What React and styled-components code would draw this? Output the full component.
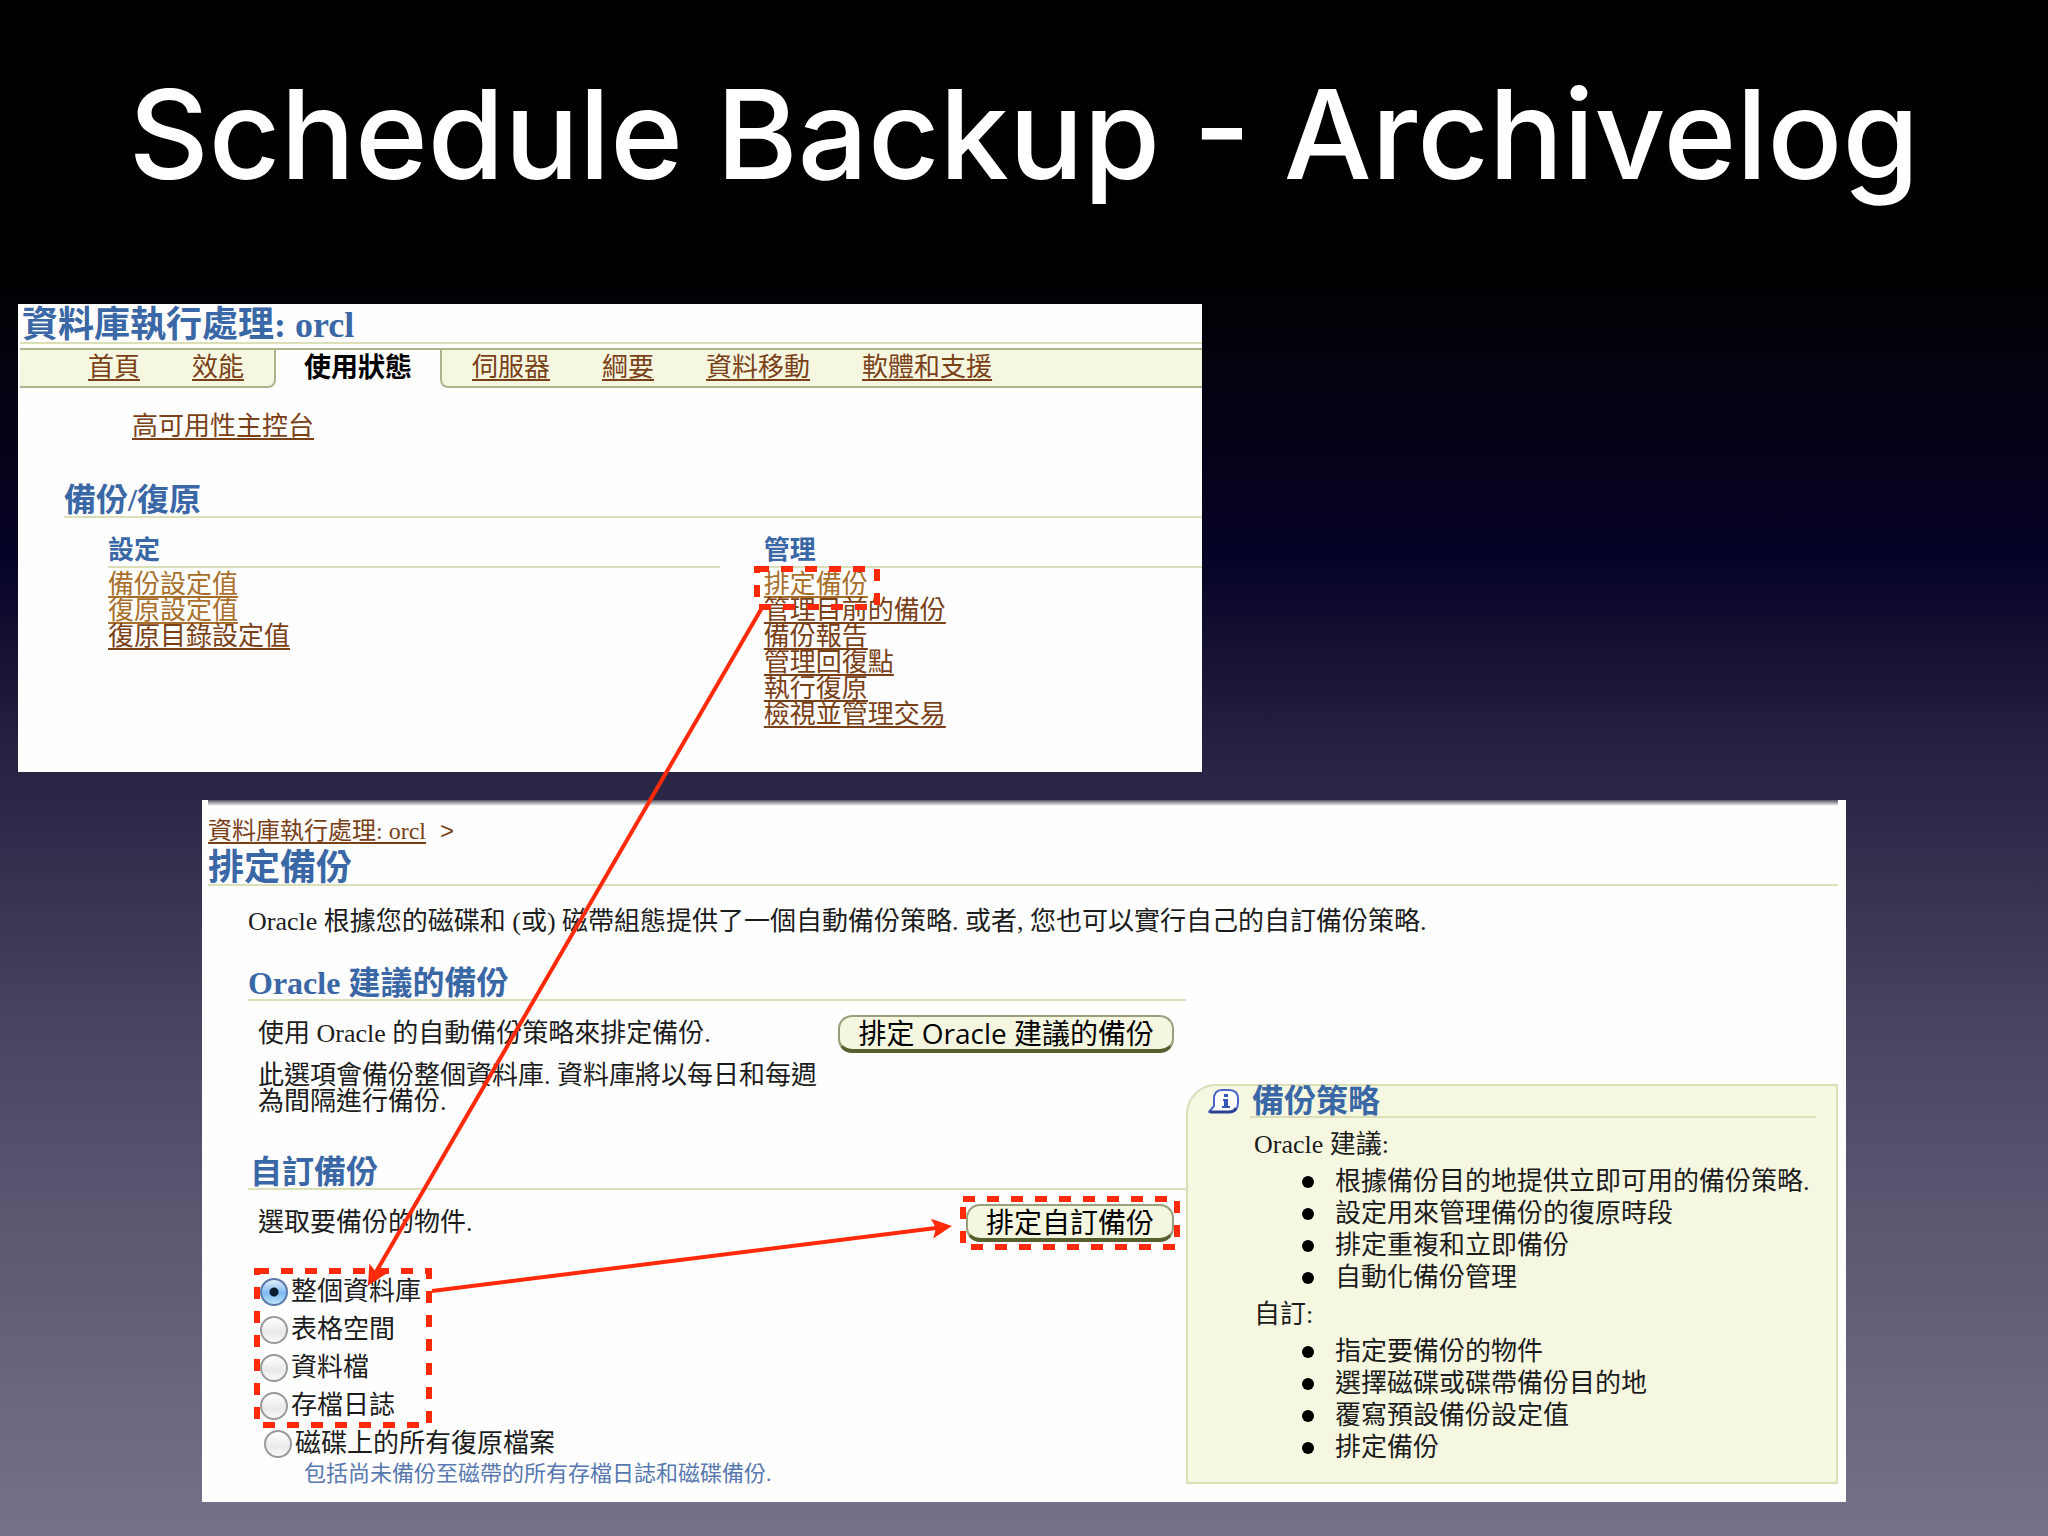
import styled, { createGlobalStyle, css } from 'styled-components';
import { useState } from 'react';

const colors = {
  heading: '#3a67a5',
  link: '#7a4118',
  visited: '#a8702c',
  note: '#5878b0',
  rule: '#dbdfb8',
  tabBorder: '#b0b48e',
  cream: '#f6f7e1',
  mark: '#ff2a0a',
};

const fonts = {
  title: 'Inter, "Liberation Sans", sans-serif',
  body: '"Liberation Serif", "Noto Sans CJK TC", serif',
  button: '"Open Sans", "Noto Sans CJK TC", sans-serif',
};

const GlobalStyle = createGlobalStyle`
  * {
    box-sizing: border-box;
  }

  body {
    margin: 0;
    background: #000;
  }

  h1, h2, h3, p, ul {
    margin: 0;
    padding: 0;
  }
`;

const Slide = styled.main`
  position: relative;
  min-height: 100vh;
  overflow: hidden;
  padding-bottom: 34px;
  font-family: ${fonts.body};
  font-size: 26px;
  line-height: 26px;
  color: #1c1c1c;
  background: linear-gradient(#000 0%, #010103 18%, #030210 25%, #050325 36%, #252242 49%, #4c4864 69%, #5f5d76 83%, #75738a 100%);
`;

const SlideTitle = styled.h1`
  padding-top: 70px;
  height: 304px;
  font-family: ${fonts.title};
  font-size: 124px;
  line-height: 128px;
  font-weight: 500;
  text-align: center;
  white-space: nowrap;
  color: #fff;
`;

const InstancePanel = styled.section`
  width: 57.8%;
  height: 468px;
  margin-left: 18px;
  padding-left: 2px;
  background: #fefefe;
`;

const PageHeading = styled.h2`
  font-size: 36px;
  line-height: 32px;
  color: ${colors.heading};
  border-bottom: 2px solid ${colors.rule};
`;

const InstanceHeading = styled(PageHeading)`
  padding: 5px 0 0 2px;
  margin-bottom: 4px;
  height: 40px;
`;

const SectionHeading = styled.h3`
  font-size: 32px;
  line-height: 32px;
  color: ${colors.heading};
  border-bottom: 2px solid ${colors.rule};
`;

const GroupHeading = styled(SectionHeading)`
  font-size: 26px;
  line-height: 30px;
`;

const Link = styled.a`
  color: ${({ $visited }) => $visited ? colors.visited : colors.link};
  text-decoration: underline;
  text-decoration-thickness: 2px;
  text-underline-offset: 3px;
`;

const Tabs = styled.nav`
  display: flex;
  height: 40px;
  line-height: 36px;
`;

const tabSurface = css`
  display: flex;
  gap: 52px;
  background: ${colors.cream};
  border: 2px solid ${colors.tabBorder};
`;

const TabsBefore = styled.div`
  ${tabSurface}
  padding: 0 30px 0 68px;
  border-left: none;
  border-bottom-right-radius: 8px;
`;

const TabsAfter = styled.div`
  ${tabSurface}
  flex: 1;
  padding-left: 30px;
  border-right: none;
  border-bottom-left-radius: 8px;
`;

const CurrentTab = styled.span`
  padding: 0 28px;
  border-top: 2px solid ${colors.tabBorder};
  font-size: 27px;
  font-weight: 700;
  color: #000;
`;

const SubNav = styled.div`
  padding: 26px 0 0 112px;
`;

const Maintenance = styled.div`
  padding: 44px 0 0 44px;
`;

const LinkColumns = styled.div`
  display: grid;
  grid-template-columns: 612fr 438fr;
  gap: 44px;
  padding: 18px 0 0 44px;
`;

const LinkList = styled.ul`
  list-style: none;
  padding-top: 4px;
`;

const SchedulePanel = styled.section`
  margin: 28px 202px 0;
  padding: 0 8px 17px 6px;
  background: #fefefe;
`;

const PanelShade = styled.div`
  height: 6px;
  background: linear-gradient(#55555f, #fefefe);
`;

const Breadcrumb = styled.div`
  display: flex;
  gap: 14px;
  padding-top: 11px;
  font-size: 24px;
  line-height: 28px;
  color: ${colors.link};
`;

const Separator = styled.span`
  font-family: "Liberation Sans", sans-serif;
`;

const ScheduleHeading = styled(PageHeading)`
  padding-top: 7px;
`;

const Intro = styled.p`
  padding: 23px 0 0 40px;
`;

const Columns = styled.div`
  display: grid;
  grid-template-columns: 978fr 652fr;
  padding-top: 32px;
`;

const Strategies = styled.div`
  padding-left: 40px;
`;

const ActionRow = styled.div`
  display: flex;
  align-items: center;
  justify-content: space-between;
  padding: 14px 12px 0 10px;
`;

const ActionButton = styled.button`
  height: 38px;
  padding: 0 18px;
  border: 2px solid #9a9e7a;
  border-bottom: 4px solid #55602e;
  border-radius: 14px;
  background: #f4f6df;
  font-family: ${fonts.button};
  font-size: 28px;
  line-height: 30px;
  white-space: nowrap;
  color: #000;
  cursor: pointer;
`;

const Description = styled.p`
  max-width: 580px;
  padding: 10px 0 0 10px;
`;

const CustomHeading = styled(SectionHeading)`
  margin-top: 41px;
  padding-left: 2px;
`;

const Options = styled.div`
  padding: 31px 0 0 12px;
`;

const Option = styled.label`
  display: flex;
  align-items: center;
  gap: 3px;
  height: 38px;
  ${({ $indent }) => $indent && `padding-left: 4px;`}
`;

const Radio = styled.input`
  appearance: none;
  width: 28px;
  height: 28px;
  margin: 0;
  border: 2px solid #9a9a9a;
  border-radius: 50%;
  background: linear-gradient(#fff, #e9e9ec 60%, #fafafa);

  &:checked {
    border-color: #5a78a8;
    background: radial-gradient(circle, #0b1d33 4px, transparent 5px), linear-gradient(#e2effb, #7db8ee 55%, #bfe4fb);
  }
`;

const Note = styled.p`
  padding-left: 56px;
  font-size: 22px;
  line-height: 22px;
  color: ${colors.note};
`;

const InfoBox = styled.aside`
  align-self: start;
  margin-top: 117px;
  height: 400px;
  border: 2px solid ${colors.rule};
  border-top-left-radius: 30px;
  background: ${colors.cream};
`;

const InfoHeader = styled.header`
  display: flex;
  gap: 10px;
  margin-bottom: 6px;
  padding: 0 20px;

  & > h3 {
    flex: 1;
    line-height: 30px;
    padding-left: 2px;
  }
`;

const InfoLabel = styled.p`
  padding: 8px 0 8px 66px;
`;

const InfoList = styled.ul`
  list-style: none;
  line-height: 32px;

  & > li {
    display: flex;
    align-items: center;
    gap: 21px;
    padding-left: 114px;
    white-space: nowrap;
  }

  & > li::before {
    content: '';
    width: 12px;
    height: 12px;
    border-radius: 50%;
    background: #000;
  }
`;

const Annotations = styled.svg`
  position: absolute;
  top: 0;
  left: 0;
  pointer-events: none;
`;

const InfoIcon = () => (
  <svg width="32" height="30" viewBox="0 0 32 30" aria-hidden="true">
    <path d="M14 4h7q9 0 9 9v4q0 9-9 9H1l5-6v-7q0-9 8-9z" fill="#fff" stroke="#4a64c8" strokeWidth="2" strokeLinejoin="round" />
    <path d="M2 26h19q5 0 7-4" fill="none" stroke="#2c3f94" strokeWidth="3" />
    <path d="M16 8h4v3h-4zM15 13h5v7h2v2h-8v-2h2v-5h-1z" fill="#3456b8" />
  </svg>
);

const manageLinks = ['管理目前的備份', '備份報告', '管理回復點', '執行復原', '檢視並管理交易'];
const objects = ['整個資料庫', '表格空間', '資料檔', '存檔日誌', '磁碟上的所有復原檔案'];
const suggestedPoints = [
  '根據備份目的地提供立即可用的備份策略.',
  '設定用來管理備份的復原時段',
  '排定重複和立即備份',
  '自動化備份管理',
];
const customPoints = ['指定要備份的物件', '選擇磁碟或碟帶備份目的地', '覆寫預設備份設定值', '排定備份'];

const marks = [
  { x: 757, y: 569, width: 120, height: 38 },
  { x: 257, y: 1271, width: 172, height: 154 },
  { x: 963, y: 1199, width: 214, height: 48 },
];

const App = () => {
  const [selected, setSelected] = useState(objects[0]);

  return (
    <Slide>
      <GlobalStyle />
      <SlideTitle>Schedule Backup - Archivelog</SlideTitle>

      <InstancePanel>
        <InstanceHeading>資料庫執行處理: orcl</InstanceHeading>
        <Tabs>
          <TabsBefore>
            <Link href="#home">首頁</Link>
            <Link href="#performance">效能</Link>
          </TabsBefore>
          <CurrentTab>使用狀態</CurrentTab>
          <TabsAfter>
            <Link href="#server">伺服器</Link>
            <Link href="#schema">綱要</Link>
            <Link href="#movement">資料移動</Link>
            <Link href="#support">軟體和支援</Link>
          </TabsAfter>
        </Tabs>
        <SubNav>
          <Link href="#console">高可用性主控台</Link>
        </SubNav>
        <Maintenance>
          <SectionHeading>備份/復原</SectionHeading>
          <LinkColumns>
            <div>
              <GroupHeading>設定</GroupHeading>
              <LinkList>
                <li><Link href="#backup-settings" $visited>備份設定值</Link></li>
                <li><Link href="#recovery-settings" $visited>復原設定值</Link></li>
                <li><Link href="#catalog-settings">復原目錄設定值</Link></li>
              </LinkList>
            </div>
            <div>
              <GroupHeading>管理</GroupHeading>
              <LinkList>
                <li><Link href="#schedule" $visited>排定備份</Link></li>
                {manageLinks.map((text) => (
                  <li key={text}><Link href="#manage">{text}</Link></li>
                ))}
              </LinkList>
            </div>
          </LinkColumns>
        </Maintenance>
      </InstancePanel>

      <SchedulePanel>
        <PanelShade />
        <Breadcrumb>
          <Link href="#instance">資料庫執行處理: orcl</Link>
          <Separator>&gt;</Separator>
        </Breadcrumb>
        <ScheduleHeading>排定備份</ScheduleHeading>
        <Intro>Oracle 根據您的磁碟和 (或) 磁帶組態提供了一個自動備份策略. 或者, 您也可以實行自己的自訂備份策略.</Intro>
        <Columns>
          <Strategies>
            <SectionHeading>Oracle 建議的備份</SectionHeading>
            <ActionRow>
              <p>使用 Oracle 的自動備份策略來排定備份.</p>
              <ActionButton type="button">排定 Oracle 建議的備份</ActionButton>
            </ActionRow>
            <Description>此選項會備份整個資料庫. 資料庫將以每日和每週為間隔進行備份.</Description>
            <CustomHeading>自訂備份</CustomHeading>
            <ActionRow>
              <p>選取要備份的物件.</p>
              <ActionButton type="button">排定自訂備份</ActionButton>
            </ActionRow>
            <Options>
              {objects.map((text, index) => (
                <Option key={text} $indent={index === objects.length - 1}>
                  <Radio
                    type="radio"
                    name="object"
                    checked={selected === text}
                    onChange={() => setSelected(text)}
                  />
                  {text}
                </Option>
              ))}
            </Options>
            <Note>包括尚未備份至磁帶的所有存檔日誌和磁碟備份.</Note>
          </Strategies>
          <InfoBox>
            <InfoHeader>
              <InfoIcon />
              <SectionHeading>備份策略</SectionHeading>
            </InfoHeader>
            <InfoLabel>Oracle 建議:</InfoLabel>
            <InfoList>
              {suggestedPoints.map((text) => <li key={text}>{text}</li>)}
            </InfoList>
            <InfoLabel>自訂:</InfoLabel>
            <InfoList>
              {customPoints.map((text) => <li key={text}>{text}</li>)}
            </InfoList>
          </InfoBox>
        </Columns>
      </SchedulePanel>

      <Annotations width="2048" height="1536" viewBox="0 0 2048 1536" aria-hidden="true">
        <defs>
          <marker id="head" markerUnits="userSpaceOnUse" markerWidth="22" markerHeight="22" refX="4" refY="10" orient="auto">
            <path d="M0 0L20 10L0 20L4 10z" fill={colors.mark} />
          </marker>
        </defs>
        <g fill="none" stroke={colors.mark}>
          {marks.map((mark) => (
            <rect key={mark.x} {...mark} strokeWidth="6" strokeDasharray="12 12" />
          ))}
          <path d="M763 606L376 1272" strokeWidth="4" markerEnd="url(#head)" />
          <path d="M432 1291L936 1228" strokeWidth="4" markerEnd="url(#head)" />
        </g>
      </Annotations>
    </Slide>
  );
};

export default App;
